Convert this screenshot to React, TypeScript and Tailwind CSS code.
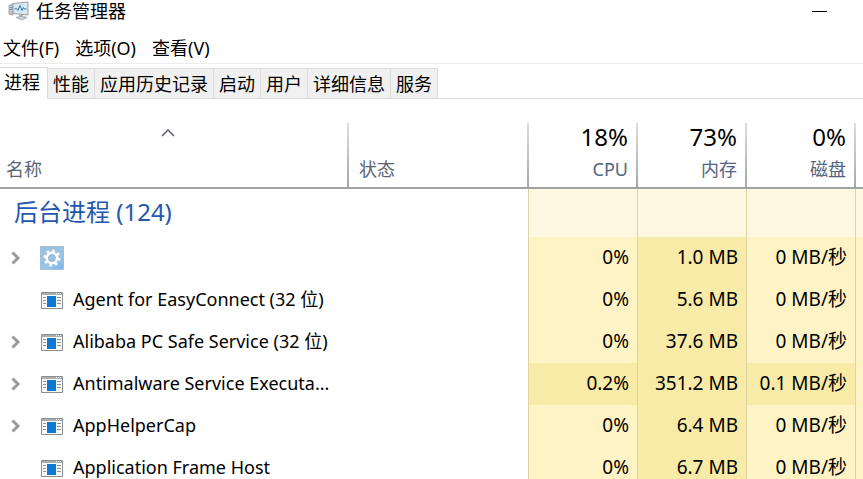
import React from 'react';

interface Process {
    name: string;
    icon: 'gear' | 'window';
    expandable: boolean;
    cpu: string;
    memory: string;
    disk: string;
    busy?: boolean;
}

const menus = ['文件(F)', '选项(O)', '查看(V)'];

const tabs = ['性能', '应用历史记录', '启动', '用户', '详细信息', '服务'];

const processes: Process[] = [
    { name: '', icon: 'gear', expandable: true, cpu: '0%', memory: '1.0 MB', disk: '0 MB/秒' },
    { name: 'Agent for EasyConnect (32 位)', icon: 'window', expandable: false, cpu: '0%', memory: '5.6 MB', disk: '0 MB/秒' },
    { name: 'Alibaba PC Safe Service (32 位)', icon: 'window', expandable: true, cpu: '0%', memory: '37.6 MB', disk: '0 MB/秒' },
    { name: 'Antimalware Service Executa...', icon: 'window', expandable: true, cpu: '0.2%', memory: '351.2 MB', disk: '0.1 MB/秒', busy: true },
    { name: 'AppHelperCap', icon: 'window', expandable: true, cpu: '0%', memory: '6.4 MB', disk: '0 MB/秒' },
    { name: 'Application Frame Host', icon: 'window', expandable: false, cpu: '0%', memory: '6.7 MB', disk: '0 MB/秒' },
];

const AppIcon = () => (
    <svg width="22" height="20" viewBox="0 0 22 20" aria-hidden="true">
        <path d="M1 4.500 5 3v11l-4-1z" fill="#c3c8cc" stroke="#8f969b" strokeWidth=".8" />
        <path d="M2 6.500h2M2 8.500h2" stroke="#747c82" strokeWidth=".8" />
        <path d="m5 2.500 15-1.500v13L5 12.500z" fill="#dfe3e6" stroke="#8f969b" strokeWidth=".9" />
        <path d="m6.500 4 12-1.300v9.600l-12-1z" fill="#d3ebfa" />
        <path d="m6.500 8 2-.5 1.500 2 2-5 2 5 1.500-3 1 1.500h2" fill="none" stroke="#35759f" strokeWidth="1" />
        <path d="M11 14h4v2h-4z" fill="#aab1b6" />
        <path d="m8 16.500 6-1.500 5 1.500-5 2.500z" fill="#cbd0d3" stroke="#9aa1a6" strokeWidth=".8" />
    </svg>
);

const GearIcon = () => (
    <svg width="24" height="24" viewBox="0 0 24 24" aria-hidden="true">
        <defs>
            <linearGradient id="gear-bg" x1="0" y1="0" x2="1" y2="1">
                <stop offset="0" stopColor="#9dbdd8" />
                <stop offset=".6" stopColor="#9cc5e8" />
                <stop offset="1" stopColor="#7db3e2" />
            </linearGradient>
        </defs>
        <path d="M.5.500h23v23H.5z" fill="url(#gear-bg)" stroke="#a3c0d8" />
        <g fill="none" stroke="#fff">
            <circle cx="12" cy="12" r="5" strokeWidth="3" />
            <circle cx="12" cy="12" r="7.300" strokeWidth="2.400" strokeDasharray="2.600 3.133" />
        </g>
        <circle cx="12" cy="12" r="3.500" fill="none" stroke="#7fa3c2" strokeWidth=".7" />
    </svg>
);

const WindowIcon = () => (
    <svg width="22" height="17" viewBox="0 0 22 17" aria-hidden="true">
        <path d="M.5.500h21v16H.5z" fill="#fafafa" stroke="#8a8f93" />
        <path d="M1 1h20v2H1z" fill="#a9aeb1" />
        <path d="M15 1.500h1m1 0h1m1 0h1" stroke="#fff" />
        <path d="M6 4h9v11H6z" fill="#0b78d4" />
        <path d="M2 5.500h3M2 8.500h3M2 11.500h3M16 5.500h4M16 8.500h4M16 11.500h4" stroke="#8d9397" />
    </svg>
);

const Chevron = () => (
    <svg width="10" height="14" viewBox="0 0 10 14" fill="none" stroke="#9b9b9b" strokeWidth="3" aria-hidden="true">
        <path d="m1.500 1.500 5.500 5.500-5.500 5.500" />
    </svg>
);

const Divider = () => (
    <span className="absolute right-0 bottom-0 h-16 w-0.5 bg-linear-to-b from-[#dedede] to-[#a5a7a9]" />
);

interface UsageHeaderProps {
    label: string;
    total: string;
}

const UsageHeader: React.FC<UsageHeaderProps> = ({ label, total }) => (
    <th scope="col" className="relative pr-2.5 pb-0.5 text-right align-bottom font-normal">
        <div className="text-2xl leading-8 text-black">{total}</div>
        <div className="text-lg leading-8 text-[#536581]">{label}</div>
        <Divider />
    </th>
);

const ProcessRow: React.FC<{ process: Process }> = ({ process }) => {
    const heat = process.busy ? 'bg-[#f8eba7]' : 'bg-[#fef3c4]';
    const cell = 'border-r border-[#ddd3a2] pr-2 pb-0.5 text-right text-[19px] leading-7 whitespace-nowrap';

    return (
        <tr className="h-[42px]">
            <td colSpan={2} className="border-r border-[#ddd3a2] p-0">
                <div className="flex items-center">
                    <div className="flex w-10 pl-[11px]">
                        {process.expandable && (
                            <button type="button" aria-label={`展开 ${process.name}`}>
                                <Chevron />
                            </button>
                        )}
                    </div>
                    <div className="mr-2 flex w-6 justify-center">
                        {process.icon === 'gear' ? <GearIcon /> : <WindowIcon />}
                    </div>
                    <span className="pb-0.5 pl-px whitespace-nowrap">{process.name}</span>
                </div>
            </td>
            <td className={`${cell} ${heat}`}>{process.cpu}</td>
            <td className={`${cell} bg-[#f8eba7]`}>{process.memory}</td>
            <td className={`${cell} ${heat}`}>{process.disk}</td>
            <td className="bg-[#fef3c4]" />
        </tr>
    );
};

const App: React.FC = () => {
    return (
        <div className="h-screen overflow-hidden bg-white font-['Noto_Sans','Noto_Sans_CJK_SC',sans-serif] text-lg text-black">
            <header className="flex h-6 items-center justify-between pr-9 pb-0.5 pl-2">
                <h1 className="flex items-center gap-1.5">
                    <AppIcon />
                    任务管理器
                </h1>
                <button type="button" aria-label="最小化" className="flex h-6 items-center">
                    <span className="h-px w-[15px] bg-black" />
                </button>
            </header>

            <nav className="flex h-10 items-center gap-4 border-b border-[#ececec] pt-2 pl-[3px]">
                {menus.map((menu) => (
                    <button key={menu} type="button">{menu}</button>
                ))}
            </nav>

            <div role="tablist" className="flex h-[35px] items-end border-b border-[#dcdcdc] leading-7">
                <button type="button" role="tab" aria-selected="true" className="-mb-px h-8 border-t border-r border-[#dcdcdc] bg-white pr-[7px] pb-1 pl-1">
                    进程
                </button>
                {tabs.map((tab) => (
                    <button key={tab} type="button" role="tab" aria-selected="false" className="h-[30px] border-t border-r border-[#dcdcdc] bg-[#f0f0f0] px-[5px]">
                        {tab}
                    </button>
                ))}
            </div>

            <table className="w-full table-fixed border-separate border-spacing-0">
                <colgroup>
                    <col className="w-[349px]" />
                    <col />
                    <col className="w-[109px]" />
                    <col className="w-[109px]" />
                    <col className="w-[109px]" />
                    <col className="w-[7px]" />
                </colgroup>
                <thead>
                    <tr className="h-[90px] *:border-b-2 *:border-[#a0a2a4]">
                        <th scope="col" className="relative pb-0.5 pl-1.5 text-left align-bottom font-normal">
                            <div className="mb-4 flex justify-center pr-5">
                                <svg width="14" height="8" viewBox="0 0 14 8" fill="none" stroke="#596473" strokeWidth="1.500" aria-hidden="true">
                                    <path d="m1 7 6-6 6 6" />
                                </svg>
                            </div>
                            <div className="leading-8 text-[#5a6472]">名称</div>
                            <Divider />
                        </th>
                        <th scope="col" className="relative pb-0.5 pl-2.5 text-left align-bottom font-normal">
                            <div className="leading-8 text-[#5a6472]">状态</div>
                            <Divider />
                        </th>
                        <UsageHeader label="CPU" total="18%" />
                        <UsageHeader label="内存" total="73%" />
                        <UsageHeader label="磁盘" total="0%" />
                        <th />
                    </tr>
                </thead>
                <tbody>
                    <tr className="h-12">
                        <th colSpan={2} scope="rowgroup" className="border-r border-[#ddd3a2] pb-0.5 pl-3.5 text-left text-2xl font-normal text-[#2458b0]">
                            后台进程 (124)
                        </th>
                        <td className="border-r border-[#ddd3a2] bg-[#fef8e2]" />
                        <td className="border-r border-[#ddd3a2] bg-[#fef8e2]" />
                        <td className="border-r border-[#ddd3a2] bg-[#fef8e2]" />
                        <td className="bg-[#fef8e2]" />
                    </tr>
                    {processes.map((process) => (
                        <ProcessRow key={process.memory} process={process} />
                    ))}
                </tbody>
            </table>
        </div>
    );
};

export default App;
